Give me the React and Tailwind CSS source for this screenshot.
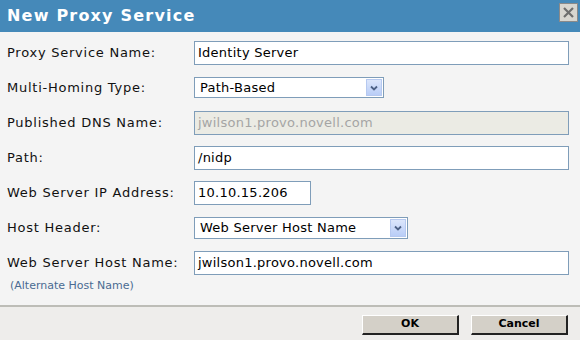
import React from "react";

const font = { fontFamily: '"DejaVu Sans", Verdana, sans-serif' };

function Arrow() {
  return (
    <div className="mr-[1px] flex h-[calc(100%-2px)] w-[16px] items-center justify-center border border-[#B6C9F0] bg-gradient-to-b from-[#DCE6FB] to-[#B9CDF7]">
      <svg width="8" height="6" viewBox="0 0 8 6">
        <path d="M1 1.5 L4 4.5 L7 1.5" stroke="#4D6185" strokeWidth="1.8" fill="none" />
      </svg>
    </div>
  );
}

function Input({ value, w, disabled, h = "h-[24px]" }) {
  return (
    <div
      className={`flex ${h} ${w} items-center border border-[#7F9DB9] pl-[3px] text-[13px] tracking-[0.25px] ${
        disabled ? "bg-[#EBEBE4] text-[#A5A5A5]" : "bg-white text-black"
      }`}
    >
      {value}
    </div>
  );
}

function Select({ value, w, h }) {
  return (
    <div className={`flex ${h} ${w} items-center justify-between border border-[#7F9DB9] bg-white pl-[5px] text-[13px] tracking-[0.25px] text-black`}>
      <span>{value}</span>
      <Arrow />
    </div>
  );
}

function Row({ label, children }) {
  return (
    <div className="flex h-[35px] items-center">
      <div className="w-[194px] pl-[7px] text-[13px] tracking-[0.75px] text-[#111]">{label}</div>
      {children}
    </div>
  );
}

function Btn({ children }) {
  return (
    <div className="flex h-[20px] w-[97px] items-center justify-center border-t border-l border-t-white border-l-white border-r-2 border-b-2 border-r-[#222] border-b-[#222] bg-[#D4D0C8] text-[11px] font-bold text-black">
      {children}
    </div>
  );
}

export default function App() {
  return (
    <div className="flex h-[340px] w-[580px] flex-col overflow-hidden" style={font}>
      <div className="flex h-[32px] items-center justify-between bg-[#4589B9] pl-[7px] pr-[2px]">
        <div className="text-[16px] font-bold tracking-[1.2px] text-white">New Proxy Service</div>
        <div className="mb-[8px] flex h-[19px] w-[19px] items-center justify-center border border-[#8A8A8A] bg-[#D8D6D0]">
          <svg width="13" height="13" viewBox="0 0 13 13">
            <path d="M2 2 L11 11 M11 2 L2 11" stroke="#6E6E6E" strokeWidth="2.2" />
          </svg>
        </div>
      </div>
      <div className="flex-1 bg-[#F4F4F4] pt-[3px]">
        <Row label="Proxy Service Name:">
          <Input value="Identity Server" w="w-[375px]" />
        </Row>
        <Row label="Multi-Homing Type:">
          <Select value="Path-Based" w="w-[190px]" h="h-[21px]" />
        </Row>
        <Row label="Published DNS Name:">
          <Input value="jwilson1.provo.novell.com" w="w-[375px]" disabled />
        </Row>
        <Row label="Path:">
          <Input value="/nidp" w="w-[375px]" />
        </Row>
        <Row label="Web Server IP Address:">
          <Input value="10.10.15.206" w="w-[117px]" />
        </Row>
        <Row label="Host Header:">
          <Select value="Web Server Host Name" w="w-[214px]" h="h-[22px]" />
        </Row>
        <Row label="Web Server Host Name:">
          <Input value="jwilson1.provo.novell.com" w="w-[375px]" />
        </Row>
        <div className="flex h-[12px] items-center pl-[10px] text-[11px] text-[#4A6B92]">(Alternate Host Name)</div>
      </div>
      <div className="flex h-[35px] justify-end gap-[12px] border-t-2 border-[#BDBDB7] bg-[#EEEDEB] pr-[12px] pt-[8px]">
        <Btn>OK</Btn>
        <Btn>Cancel</Btn>
      </div>
    </div>
  );
}
